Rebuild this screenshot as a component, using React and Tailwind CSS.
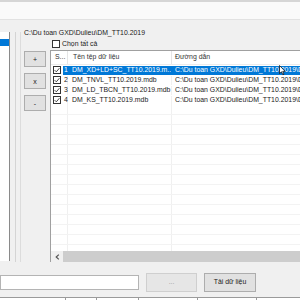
import React from "react";

const rows = [
  { n: 1, name: "DM_XD+LD+SC_TT10.2019.m...", sel: true },
  { n: 2, name: "DM_TNVL_TT10.2019.mdb" },
  { n: 3, name: "DM_LD_TBCN_TT10.2019.mdb" },
  { n: 4, name: "DM_KS_TT10.2019.mdb" },
];

const PATH = "C:\\Du toan GXD\\Dulieu\\DM_TT10.2019\\D";

const Check = ({ checked }) => (
  <div className="w-[8px] h-[8px] border border-[#333] bg-white flex items-center justify-center">
    {checked && (
      <svg width="6" height="6" viewBox="0 0 6 6">
        <path d="M0.6 3.1 L2.3 4.8 L5.4 1.2" fill="none" stroke="#333" strokeWidth="0.9" />
      </svg>
    )}
  </div>
);

const SideButton = ({ label }) => (
  <button className="w-[22px] h-[16px] bg-[#e1e1e1] border border-[#adadad] text-[7px] leading-none text-[#222] flex items-center justify-center">
    {label}
  </button>
);

export default function App() {
  return (
    <div
      className="relative w-[300px] h-[300px] bg-[#f0f0f0] overflow-hidden flex flex-col text-[6.9px] text-[#1a1a1a]"
      style={{ fontFamily: '"Liberation Sans", Arial, sans-serif' }}
    >
      {/* top strip */}
      <div className="h-[20px] shrink-0 bg-[#fafafa] border-t-2 border-[#d6d6d6] border-b border-b-[#e2e2e2]" />

      {/* main */}
      <div className="h-[242px] shrink-0 flex">
        {/* left tree panel */}
        <div className="w-[10px] mt-[12px] h-[229px] bg-white border-r border-[#8a8a8a] pt-[7px]">
          <div className="h-[7px] w-[9px] bg-[#0078d7]" />
        </div>
        <div className="w-[1px] ml-[5px] mt-[12px] h-[230px] bg-[#d4d4d4]" />
        <div className="w-[1px] ml-[4px] mt-[12px] h-[230px] bg-[#dcdcdc]" />

        {/* right section */}
        <div className="ml-[3px] flex-1 flex flex-col pt-[8px] min-w-0">
          <div className="h-[9px] leading-[9px] whitespace-nowrap">C:\Du toan GXD\Dulieu\DM_TT10.2019</div>
          <div className="mt-[3px] h-[8px] pl-[28px] flex items-center gap-[2px]">
            <Check />
            <span className="leading-[8px]">Chọn tất cả</span>
          </div>

          <div className="mt-[2px] h-[212px] flex">
            <div className="w-[22px] pt-[1px] flex flex-col gap-[6px]">
              <SideButton label="+" />
              <SideButton label="x" />
              <SideButton label="-" />
            </div>

            {/* list view */}
            <div className="ml-[4px] flex-1 h-[212px] bg-white border-l border-t border-[#a0a0a0] flex flex-col overflow-hidden">
              <div className="h-[14px] shrink-0 flex items-center border-b border-[#ececec] whitespace-nowrap text-[#333]">
                <div className="w-[17px] pl-[4px] border-r border-[#e5e5e5] h-full flex items-center">S...</div>
                <div className="w-[104px] pl-[5px] border-r border-[#e5e5e5] h-full flex items-center">Tên tệp dữ liệu</div>
                <div className="pl-[3px] flex items-center h-full">Đường dẫn</div>
              </div>

              <div className="flex-1 overflow-hidden">
                {rows.map((r) => (
                  <div key={r.n} className="h-[10px] flex items-center whitespace-nowrap">
                    <div className="w-[12px] pl-[2px] h-full flex items-center">
                      <Check checked />
                    </div>
                    <div className={`flex-1 min-w-0 h-[9px] flex items-center overflow-hidden ${r.sel ? "bg-[#0078d7] text-white" : ""}`}>
                      <div className={`w-[5px] shrink-0 h-full flex items-center pl-[1px] border-r ${r.sel ? "border-[#0078d7]" : "border-[#f0f0f0]"}`}>{r.n}</div>
                      <div className={`w-[104px] shrink-0 pl-[4px] overflow-hidden h-full flex items-center border-r ${r.sel ? "border-[#0078d7]" : "border-[#f0f0f0]"}`}>{r.name}</div>
                      <div className="pl-[3px] shrink-0">{PATH}</div>
                    </div>
                  </div>
                ))}
                {Array.from({ length: 15 }).map((_, i) => (
                  <div key={i} className="h-[10px] flex border-b border-[#f3f3f3]">
                    <div className="w-[17px] border-r border-[#f0f0f0]" />
                    <div className="w-[104px] border-r border-[#f0f0f0]" />
                  </div>
                ))}
              </div>

              {/* horizontal scrollbar */}
              <div className="h-[11px] shrink-0 flex">
                <div className="w-[12px] bg-[#f0f0f0] flex items-center justify-center">
                  <svg width="5" height="6" viewBox="0 0 5 6">
                    <path d="M3.8 0.6 L1.2 3 L3.8 5.4" fill="none" stroke="#555" strokeWidth="1.2" />
                  </svg>
                </div>
                <div className="flex-1 bg-[#cdcdcd]" />
              </div>
            </div>
          </div>
        </div>
      </div>

      {/* bottom controls */}
      <div className="mt-[11px] h-[19px] shrink-0 flex items-center">
        <div className="w-[139px] h-[15px] bg-white border border-[#b4b4b4]" />
        <button className="ml-[7px] w-[51px] h-[19px] bg-[#e6e6e6] border border-[#cfcfcf] text-[#9a9a9a] leading-none flex items-center justify-center">
          ...
        </button>
        <button className="ml-[7px] w-[52px] h-[19px] bg-[#e1e1e1] border border-[#adadad] leading-none flex items-center justify-center">
          Tải dữ liệu
        </button>
      </div>

      {/* table edge */}
      <div className="mt-[5px] flex-1 flex bg-white border-t border-[#9a9a9a]">
        <div className="w-[66px] border-r border-[#9a9a9a]" />
        <div className="w-[31px] border-r border-[#9a9a9a]" />
        <div className="w-[42px] border-r border-[#9a9a9a]" />
        <div className="w-[59px] border-r border-[#9a9a9a]" />
        <div className="w-[59px] border-r border-[#9a9a9a]" />
      </div>

      {/* mouse pointer */}
      <svg className="absolute left-[279px] top-[65px]" width="7" height="11" viewBox="0 0 7 11">
        <path d="M0.5 0.5 L0.5 8.5 L2.5 6.8 L3.9 9.8 L5 9.3 L3.7 6.4 L6.2 6.4 Z" fill="#fff" stroke="#000" strokeWidth="0.7" />
      </svg>
    </div>
  );
}
